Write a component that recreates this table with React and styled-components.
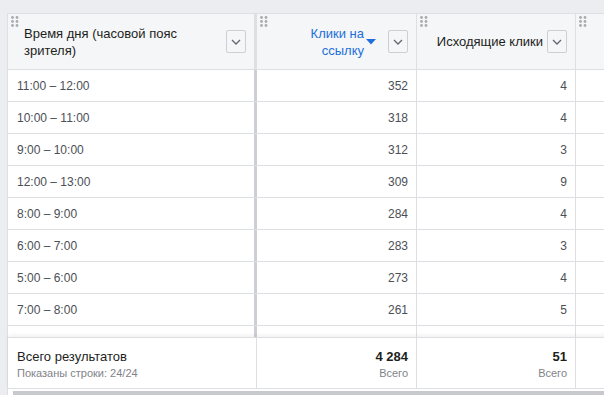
import React from "react";
import styled, { createGlobalStyle } from "styled-components";

const GlobalStyle = createGlobalStyle`
  html, body {
    margin: 0;
    padding: 0;
    background: #ebedf0;
    font-family: "Liberation Sans", Arial, sans-serif;
  }
`;

const COLUMNS = "249px 160px 159px 200px";

const Page = styled.div`
  width: 604px;
  height: 395px;
  overflow: hidden;
  padding: 13px 0 0 7px;
  box-sizing: border-box;
`;

const Table = styled.div`
  width: 780px;
  height: 382px;
  display: flex;
  flex-direction: column;
  background: #fff;
  border-left: 1px solid #dddfe2;
  border-top: 1px solid #dddfe2;
`;

const HeaderRow = styled.div`
  display: grid;
  grid-template-columns: ${COLUMNS};
  height: 56px;
  box-sizing: border-box;
  border-bottom: 1px solid #dddfe2;
  background: #f5f6f7;
`;

const HeadCell = styled.div`
  position: relative;
  display: flex;
  align-items: center;
  justify-content: ${({ $numeric }) => ($numeric ? "flex-end" : "space-between")};
  gap: 4px;
  padding: ${({ $first }) => ($first ? "0 8px 0 16px" : "0 8px 0 12px")};
  box-sizing: border-box;
  border-right: ${({ $first }) => ($first ? "3px solid #dddfe2" : "1px solid #dddfe2")};
  color: ${({ $active }) => ($active ? "#216fdb" : "#1c1e21")};
  font-size: 13px;
  line-height: 17px;
`;

const HeadText = styled.span`
  text-align: ${({ $numeric }) => ($numeric ? "right" : "left")};
  max-width: ${({ $narrow }) => ($narrow ? "70px" : "180px")};
`;

const Handle = styled.svg`
  position: absolute;
  top: 2px;
  left: 3px;
`;

const DropButton = styled.div`
  width: 18px;
  height: 21px;
  flex: none;
  display: flex;
  align-items: center;
  justify-content: center;
  border: 1px solid #ccd0d5;
  border-radius: 2px;
  margin-left: ${({ $gap }) => $gap || 0}px;
`;

const Body = styled.div`
  height: 267px;
  overflow: hidden;
`;

const Row = styled.div`
  display: grid;
  grid-template-columns: ${COLUMNS};
  height: 32px;
  box-sizing: border-box;
  border-bottom: 1px solid #dddfe2;
`;

const Cell = styled.div`
  display: flex;
  align-items: center;
  justify-content: ${({ $numeric }) => ($numeric ? "flex-end" : "flex-start")};
  padding: 0 8px 0 9px;
  box-sizing: border-box;
  border-right: ${({ $first }) => ($first ? "3px solid #ccd0d5" : "1px solid #dddfe2")};
  color: #4b4f56;
  font-size: 12px;
`;

const Footer = styled.div`
  display: grid;
  grid-template-columns: ${COLUMNS};
  height: 52px;
  box-sizing: border-box;
  border-top: 1px solid #dddfe2;
  border-bottom: 1px solid #dddfe2;
  box-shadow: 0 -2px 4px rgba(0, 0, 0, 0.06);
  position: relative;
  background: #fff;
`;

const FootCell = styled.div`
  display: flex;
  flex-direction: column;
  justify-content: center;
  align-items: ${({ $numeric }) => ($numeric ? "flex-end" : "flex-start")};
  gap: 2px;
  padding: 4px 8px 0 9px;
  box-sizing: border-box;
  border-right: 1px solid #dddfe2;
`;

const FootMain = styled.div`
  font-size: 13px;
  line-height: 14px;
  color: #1c1e21;
  font-weight: ${({ $bold }) => ($bold ? 700 : 400)};
`;

const FootSub = styled.div`
  font-size: 11px;
  line-height: 14px;
  color: #7f8389;
`;

const Scrollbar = styled.div`
  margin: 2px 0 0 5px;
  height: 4px;
  background: #c8c9cc;
`;

const DragDots = () => (
  <Handle width="8" height="12" viewBox="0 0 8 12">
    {[0, 1, 2].map((r) =>
      [0, 1].map((c) => (
        <circle key={`${r}${c}`} cx={1.5 + c * 4.5} cy={1.5 + r * 4} r="1.4" fill="#a8abb0" />
      ))
    )}
  </Handle>
);

const Chevron = () => (
  <svg width="10" height="6" viewBox="0 0 10 6">
    <polyline points="1,1 5,5 9,1" fill="none" stroke="#606770" strokeWidth="1.3" />
  </svg>
);

const SortDown = () => (
  <svg width="10" height="6" viewBox="0 0 10 6" style={{ flex: "none", marginLeft: -2 }}>
    <polygon points="0,0 10,0 5,5.5" fill="#216fdb" />
  </svg>
);

const rows = [
  ["11:00 – 12:00", "352", "4"],
  ["10:00 – 11:00", "318", "4"],
  ["9:00 – 10:00", "312", "3"],
  ["12:00 – 13:00", "309", "9"],
  ["8:00 – 9:00", "284", "4"],
  ["6:00 – 7:00", "283", "3"],
  ["5:00 – 6:00", "273", "4"],
  ["7:00 – 8:00", "261", "5"],
  ["2:00 – 3:00", "234", "1"],
];

const App = () => {
  return (
    <Page>
      <GlobalStyle />
      <Table>
        <HeaderRow>
          <HeadCell $first>
            <DragDots />
            <HeadText>Время дня (часовой пояс зрителя)</HeadText>
            <DropButton>
              <Chevron />
            </DropButton>
          </HeadCell>
          <HeadCell $numeric $active>
            <DragDots />
            <HeadText $numeric $narrow>Клики на ссылку</HeadText>
            <SortDown />
            <DropButton $gap={8}>
              <Chevron />
            </DropButton>
          </HeadCell>
          <HeadCell $numeric>
            <DragDots />
            <HeadText $numeric>Исходящие клики</HeadText>
            <DropButton>
              <Chevron />
            </DropButton>
          </HeadCell>
          <HeadCell>
            <DragDots />
          </HeadCell>
        </HeaderRow>
        <Body>
          {rows.map(([time, clicks, out]) => (
            <Row key={time}>
              <Cell $first>{time}</Cell>
              <Cell $numeric>{clicks}</Cell>
              <Cell $numeric>{out}</Cell>
              <Cell />
            </Row>
          ))}
        </Body>
        <Footer>
          <FootCell>
            <FootMain>Всего результатов</FootMain>
            <FootSub>Показаны строки: 24/24</FootSub>
          </FootCell>
          <FootCell $numeric>
            <FootMain $bold>4 284</FootMain>
            <FootSub>Всего</FootSub>
          </FootCell>
          <FootCell $numeric>
            <FootMain $bold>51</FootMain>
            <FootSub>Всего</FootSub>
          </FootCell>
          <FootCell />
        </Footer>
        <Scrollbar />
      </Table>
    </Page>
  );
};

export default App;
